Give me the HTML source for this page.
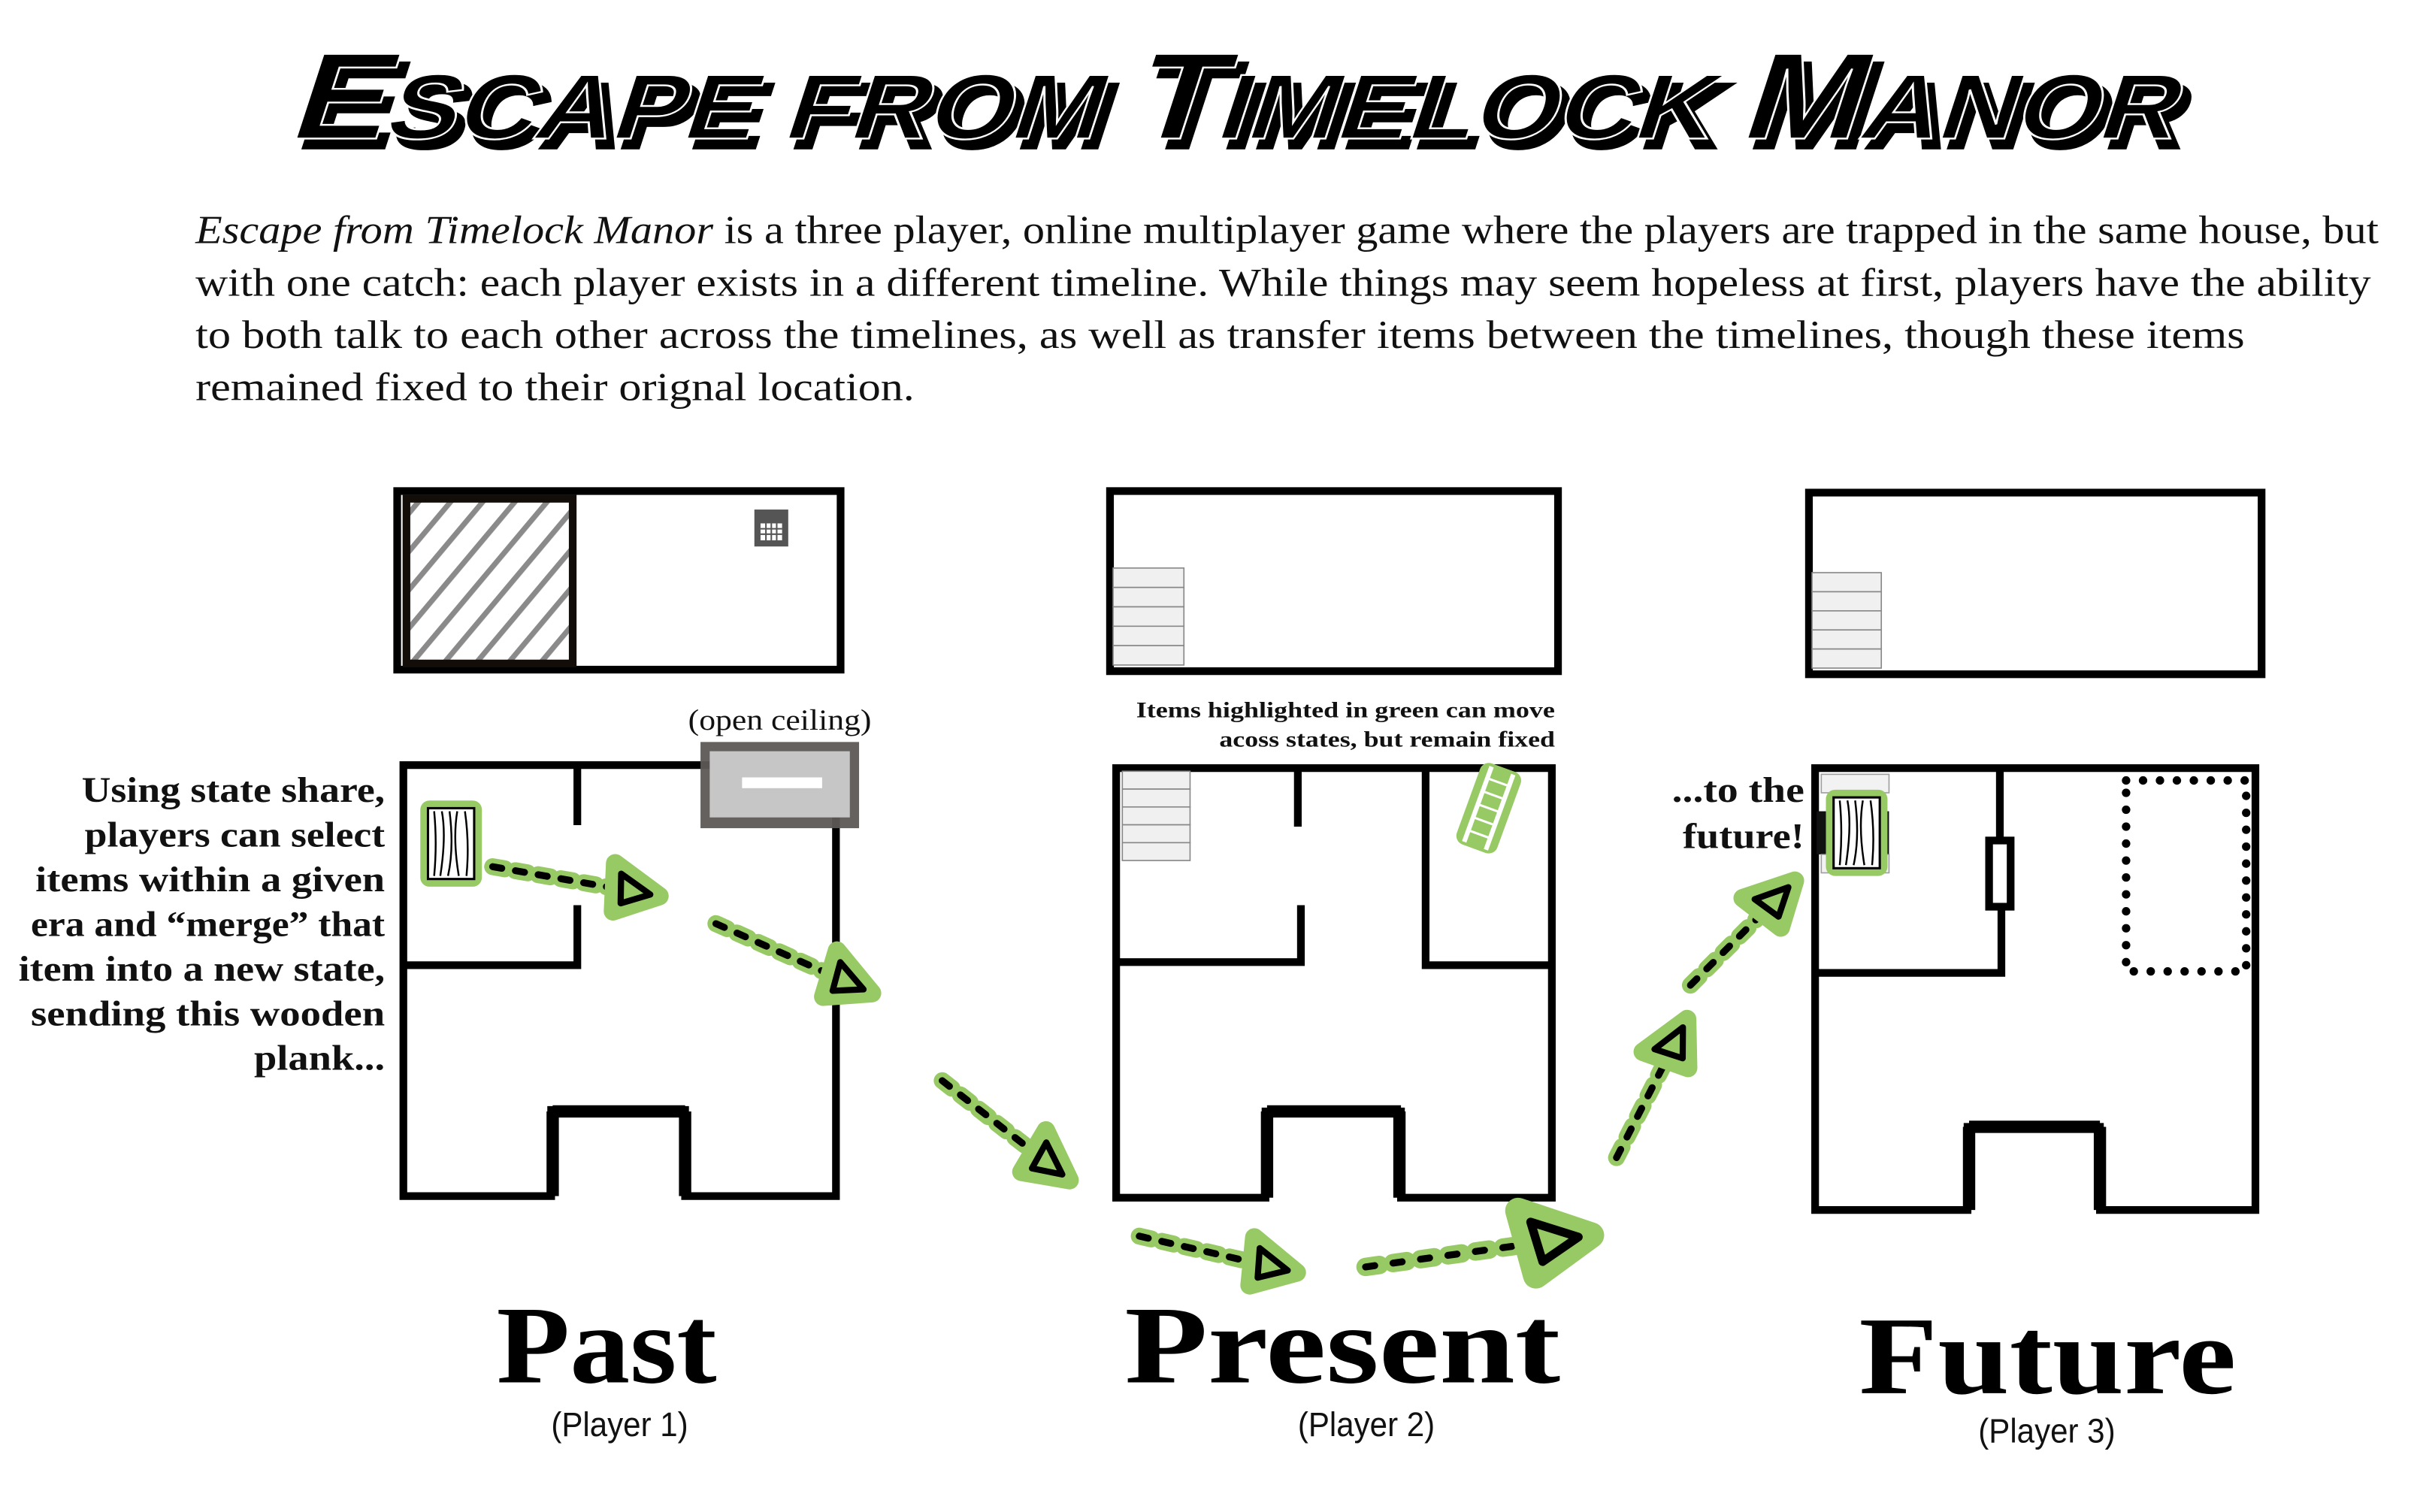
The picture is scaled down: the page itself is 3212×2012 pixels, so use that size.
<!DOCTYPE html>
<html><head><meta charset="utf-8"><style>
html,body{margin:0;padding:0;background:#fff;}
svg{display:block;}
</style></head><body>
<svg width="3212" height="2012" viewBox="0 0 1568 982.2" xmlns="http://www.w3.org/2000/svg">
<defs>
<pattern id="hatch" width="16" height="16" patternUnits="userSpaceOnUse" patternTransform="rotate(40)">
<rect width="16" height="16" fill="#fff"/><rect x="0" y="0" width="3.5" height="16" fill="#8a8a8a"/>
</pattern>
<g id="tri"><polygon points="0,0 -32,-16 -28,15" fill="#97c965" stroke="#97c965" stroke-width="12" stroke-linejoin="round"/><polygon points="-6,0 -27,-10 -24,9" fill="#97c965" stroke="#000" stroke-width="4" stroke-linejoin="round"/></g>
<g id="plank"><rect x="-3" y="-3" width="40" height="56" rx="6" fill="#97c965"/><rect x="2" y="2" width="30" height="46" fill="#fff" stroke="#000" stroke-width="1.5"/>
<path d="M6 4 Q8 25 6 46 M11 4 Q14 20 10 46 M16 4 Q19 28 15 46 M21 4 Q18 22 22 46 M26 4 Q29 25 27 46" stroke="#000" stroke-width="1.2" fill="none"/></g>
</defs>
<!-- Title -->
<text x="0" y="0" transform="translate(191,96) skewX(-18)" font-family="Liberation Sans, sans-serif" font-weight="bold" font-size="60" fill="#000" stroke="#000" stroke-width="2" textLength="1225" lengthAdjust="spacingAndGlyphs"><tspan font-size="80">E</tspan>SCAPE FROM <tspan font-size="80">T</tspan>IMELOCK <tspan font-size="80">M</tspan>ANOR</text>
<text x="0" y="0" transform="translate(186,90) skewX(-18)" font-family="Liberation Sans, sans-serif" font-weight="bold" font-size="60" fill="#000" stroke="#fff" stroke-width="1.2" textLength="1225" lengthAdjust="spacingAndGlyphs"><tspan font-size="80">E</tspan>SCAPE FROM <tspan font-size="80">T</tspan>IMELOCK <tspan font-size="80">M</tspan>ANOR</text>
<!-- Paragraph -->
<g font-family="Liberation Serif, serif" font-size="26" fill="#111">
<text x="127" y="158" textLength="1418" lengthAdjust="spacingAndGlyphs"><tspan font-style="italic">Escape from Timelock Manor</tspan> is a three player, online multiplayer game where the players are trapped in the same house, but</text>
<text x="127" y="192" textLength="1413" lengthAdjust="spacingAndGlyphs">with one catch: each player exists in a different timeline. While things may seem hopeless at first, players have the ability</text>
<text x="127" y="226" textLength="1331" lengthAdjust="spacingAndGlyphs">to both talk to each other across the timelines, as well as transfer items between the timelines, though these items</text>
<text x="127" y="260" textLength="467" lengthAdjust="spacingAndGlyphs">remained fixed to their orignal location.</text>
</g>
<!-- PAST upper -->
<rect x="258" y="319" width="288" height="116" fill="#fff" stroke="#000" stroke-width="5"/>
<rect x="264" y="324" width="108" height="107" fill="url(#hatch)" stroke="#120d08" stroke-width="5"/>
<rect x="490" y="331" width="22" height="24" fill="#555"/>
<g fill="#fff"><rect x="494" y="340" width="14" height="11"/></g>
<path d="M494 343.5h14M494 347h14M497.5 340v11M501 340v11M504.5 340v11" stroke="#555" stroke-width="1"/>
<!-- PAST lower -->
<g fill="none" stroke="#000" stroke-width="5">
<path d="M262 497 H543 V777 H445 V721 H358 V777 H262 Z"/>
<path d="M375 497 V536 M375 588 V627 H262"/>
</g>
<path d="M359 722H445M359 722V777M445 722V777" stroke="#000" stroke-width="8"/>
<rect x="455" y="482" width="103" height="56" fill="#5d5955" opacity="0.95"/>
<rect x="461" y="488" width="91" height="43" fill="#c6c6c6"/>
<rect x="482" y="505" width="52" height="7" fill="#fff"/>
<text x="447" y="474" font-family="Liberation Serif, serif" font-size="19" fill="#111" textLength="119" lengthAdjust="spacingAndGlyphs">(open ceiling)</text>
<use href="#plank" x="276" y="523"/>
<g font-family="Liberation Serif, serif" font-weight="bold" font-size="23.5" fill="#111" text-anchor="end" lengthAdjust="spacingAndGlyphs">
<text x="250" y="521" textLength="197" lengthAdjust="spacingAndGlyphs">Using state share,</text>
<text x="250" y="550" textLength="195" lengthAdjust="spacingAndGlyphs">players can select</text>
<text x="250" y="579" textLength="227" lengthAdjust="spacingAndGlyphs">items within a given</text>
<text x="250" y="608" textLength="230" lengthAdjust="spacingAndGlyphs">era and “merge” that</text>
<text x="250" y="637" textLength="238" lengthAdjust="spacingAndGlyphs">item into a new state,</text>
<text x="250" y="666" textLength="230" lengthAdjust="spacingAndGlyphs">sending this wooden</text>
<text x="250" y="695" textLength="85" lengthAdjust="spacingAndGlyphs">plank...</text>
</g>
<!-- PRESENT upper -->
<rect x="721" y="319" width="291" height="117" fill="#fff" stroke="#000" stroke-width="5"/>
<g fill="#f0f0f0" stroke="#888" stroke-width="0.8"><rect x="723" y="369" width="46" height="12.6"/><rect x="723" y="381.6" width="46" height="12.6"/><rect x="723" y="394.2" width="46" height="12.6"/><rect x="723" y="406.8" width="46" height="12.6"/><rect x="723" y="419.4" width="46" height="12.6"/></g>
<!-- PRESENT lower -->
<g fill="none" stroke="#000" stroke-width="5">
<path d="M725 499 H1008 V778 H910 V722 H822 V778 H725 Z"/>
<path d="M843 499 V537 M845 588 V625 H725 M926 499 V627 H1007"/>
</g>
<path d="M823 722H910M823 722V778M909 722V778" stroke="#000" stroke-width="8" fill="none"/>
<g fill="#f0f0f0" stroke="#888" stroke-width="0.8"><rect x="729" y="501" width="44" height="11.6"/><rect x="729" y="512.6" width="44" height="11.6"/><rect x="729" y="524.2" width="44" height="11.6"/><rect x="729" y="535.8" width="44" height="11.6"/><rect x="729" y="547.4" width="44" height="11.6"/></g>
<g transform="translate(967,525) rotate(20)"><rect x="-14" y="-28" width="28" height="56" rx="6" fill="#97c965"/><rect x="-9" y="-26" width="3" height="52" fill="#fff"/><rect x="6" y="-26" width="3" height="52" fill="#fff"/><path d="M-7 -18H7M-7 -9H7M-7 0H7M-7 9H7M-7 18H7" stroke="#fff" stroke-width="1.5"/></g>
<g font-family="Liberation Serif, serif" font-weight="bold" font-size="14.5" fill="#111" text-anchor="end">
<text x="1010" y="466" textLength="272" lengthAdjust="spacingAndGlyphs">Items highlighted in green can move</text>
<text x="1010" y="485" textLength="218" lengthAdjust="spacingAndGlyphs">acoss states, but remain fixed</text>
</g>
<!-- FUTURE upper -->
<rect x="1175" y="320" width="294" height="118" fill="#fff" stroke="#000" stroke-width="5"/>
<g fill="#f0f0f0" stroke="#888" stroke-width="0.8"><rect x="1177" y="372" width="45" height="12.4"/><rect x="1177" y="384.4" width="45" height="12.4"/><rect x="1177" y="396.8" width="45" height="12.4"/><rect x="1177" y="409.2" width="45" height="12.4"/><rect x="1177" y="421.6" width="45" height="12.4"/></g>
<!-- FUTURE lower -->
<g fill="none" stroke="#000" stroke-width="5">
<path d="M1179 499 H1465 V786 H1364 V732 H1278 V786 H1179 Z"/>
<path d="M1299 499 V544 M1300 590 V632 H1179"/>
</g>
<path d="M1279 732H1364M1279 732V786M1364 732V786" stroke="#000" stroke-width="8"/>
<rect x="1292" y="546" width="14" height="43" fill="#fff" stroke="#000" stroke-width="5"/>
<rect x="1180" y="527" width="47" height="28" fill="#111"/>
<g fill="#f0f0f0" stroke="#888" stroke-width="0.8" opacity="0.8"><rect x="1183" y="503" width="44" height="12"/><rect x="1183" y="555" width="44" height="12"/></g>
<use href="#plank" x="1189" y="516"/>
<rect x="1381" y="507" width="78" height="124" fill="none" stroke="#000" stroke-width="5.5" stroke-dasharray="0 11" stroke-linecap="round"/>
<g font-family="Liberation Serif, serif" font-weight="bold" font-size="23.5" fill="#111" text-anchor="end">
<text x="1172" y="521" textLength="86" lengthAdjust="spacingAndGlyphs">...to the</text>
<text x="1172" y="551" textLength="79" lengthAdjust="spacingAndGlyphs">future!</text>
</g>
<!-- Arrows -->
<g fill="none" stroke-linecap="round">
<g transform="translate(320,563) rotate(10)"><path d="M0 0H82" stroke="#97c965" stroke-width="11" stroke-dasharray="8 7"/><path d="M0 0H82" stroke="#000" stroke-width="4.5" stroke-dasharray="6 9"/><use href="#tri" x="110"/></g>
<g transform="translate(465,600) rotate(24)"><path d="M0 0H83" stroke="#97c965" stroke-width="11" stroke-dasharray="8 7"/><path d="M0 0H83" stroke="#000" stroke-width="4.5" stroke-dasharray="6 9"/><use href="#tri" x="111"/></g>
<g transform="translate(612,702) rotate(38)"><path d="M0 0H77" stroke="#97c965" stroke-width="11" stroke-dasharray="8 7"/><path d="M0 0H77" stroke="#000" stroke-width="4.5" stroke-dasharray="6 9"/><use href="#tri" x="105"/></g>
<g transform="translate(740,803) rotate(13)"><path d="M0 0H77" stroke="#97c965" stroke-width="11" stroke-dasharray="8 7"/><path d="M0 0H77" stroke="#000" stroke-width="4.5" stroke-dasharray="6 9"/><use href="#tri" x="105"/></g>
<g transform="translate(887,823) rotate(-8)"><path d="M0 0H105" stroke="#97c965" stroke-width="12" stroke-dasharray="9 9"/><path d="M0 0H105" stroke="#000" stroke-width="4.5" stroke-dasharray="6 12"/><use href="#tri" transform="translate(148,0) scale(1.4)"/></g>
<g transform="translate(1050,752) rotate(-63)"><path d="M0 0H73" stroke="#97c965" stroke-width="11" stroke-dasharray="8 7"/><path d="M0 0H73" stroke="#000" stroke-width="4.5" stroke-dasharray="6 9"/><use href="#tri" x="101"/></g>
<g transform="translate(1098,640) rotate(-45)"><path d="M0 0H68" stroke="#97c965" stroke-width="11" stroke-dasharray="8 7"/><path d="M0 0H68" stroke="#000" stroke-width="4.5" stroke-dasharray="6 9"/><use href="#tri" x="96"/></g>
</g>
<!-- Labels -->
<g font-family="Liberation Serif, serif" font-weight="bold" fill="#000" text-anchor="middle">
<text x="394" y="898" font-size="72" textLength="143" lengthAdjust="spacingAndGlyphs">Past</text>
<text x="872" y="898" font-size="72" textLength="283" lengthAdjust="spacingAndGlyphs">Present</text>
<text x="1330" y="905" font-size="72" textLength="245" lengthAdjust="spacingAndGlyphs">Future</text>
</g>
<g font-family="Liberation Sans, sans-serif" font-size="22" fill="#111">
<text x="358" y="933" textLength="89" lengthAdjust="spacingAndGlyphs">(Player 1)</text>
<text x="843" y="933" textLength="89" lengthAdjust="spacingAndGlyphs">(Player 2)</text>
<text x="1285" y="937" textLength="89" lengthAdjust="spacingAndGlyphs">(Player 3)</text>
</g>
</svg>
</body></html>
